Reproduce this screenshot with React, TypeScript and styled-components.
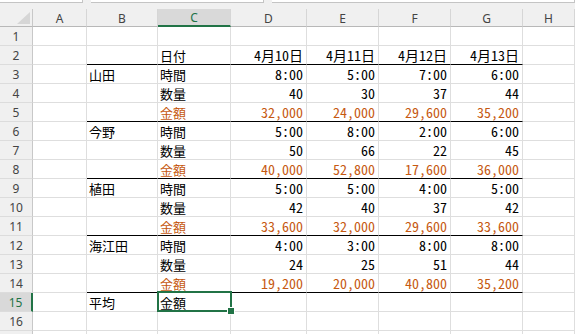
import styled, { createGlobalStyle } from "styled-components";

const GREEN = "#217346";
const ORANGE = "#c65911";
const GRID = "#dedede";

const GlobalStyle = createGlobalStyle`
  html, body {
    margin: 0;
    padding: 0;
    background: #ffffff;
    overflow: hidden;
  }
`;

const COLS = ["A", "B", "C", "D", "E", "F", "G", "H"];

type Row = {
  b?: string;
  c?: string;
  vals?: string[];
  money?: boolean;
  thick?: boolean;
};

const ROWS: Row[] = [
  {},
  { c: "日付", vals: ["4月10日", "4月11日", "4月12日", "4月13日"], thick: true },
  { b: "山田", c: "時間", vals: ["8:00", "5:00", "7:00", "6:00"] },
  { c: "数量", vals: ["40", "30", "37", "44"] },
  { c: "金額", vals: ["32,000", "24,000", "29,600", "35,200"], money: true, thick: true },
  { b: "今野", c: "時間", vals: ["5:00", "8:00", "2:00", "6:00"] },
  { c: "数量", vals: ["50", "66", "22", "45"] },
  { c: "金額", vals: ["40,000", "52,800", "17,600", "36,000"], money: true, thick: true },
  { b: "植田", c: "時間", vals: ["5:00", "5:00", "4:00", "5:00"] },
  { c: "数量", vals: ["42", "40", "37", "42"] },
  { c: "金額", vals: ["33,600", "32,000", "29,600", "33,600"], money: true, thick: true },
  { b: "海江田", c: "時間", vals: ["4:00", "3:00", "8:00", "8:00"] },
  { c: "数量", vals: ["24", "25", "51", "44"] },
  { c: "金額", vals: ["19,200", "20,000", "40,800", "35,200"], money: true, thick: true },
  { b: "平均", c: "金額" },
  {},
];

const SELECTED_ROW = 15;

export default function App() {
  return (
    <>
      <GlobalStyle />
      <Page>
        <FormulaStrip>
          <StripBox $w={82} />
          <StripBox $w={172} />
          <StripBox $grow />
        </FormulaStrip>
        <Sheet>
          <Corner>
            <svg width="13" height="12" viewBox="0 0 13 12">
              <polygon points="13,0 13,12 0,12" fill="#d6d6d6" />
            </svg>
          </Corner>
          {COLS.map((col) => (
            <ColHead key={col} $selected={col === "C"}>
              {col}
            </ColHead>
          ))}
          {ROWS.map((row, i) => {
            const n = i + 1;
            const selected = n === SELECTED_ROW;
            return [
              <RowHead key={`h${n}`} $selected={selected}>
                {n}
              </RowHead>,
              <Cell key={`a${n}`} />,
              <Cell key={`b${n}`} $thick={row.thick}>
                {row.b}
              </Cell>,
              <Cell key={`c${n}`} $thick={row.thick} $money={row.money}>
                {row.c}
                {selected && (
                  <Selection>
                    <Handle />
                  </Selection>
                )}
              </Cell>,
              ...[0, 1, 2, 3].map((k) => (
                <NumCell key={`v${n}${k}`} $thick={row.thick} $money={row.money}>
                  {row.vals?.[k]}
                </NumCell>
              )),
              <Cell key={`h2${n}`} />,
            ];
          })}
          {/* row 17, only its top edge is in view */}
          <RowHead />
          {COLS.map((col) => (
            <Cell key={`r17${col}`} />
          ))}
        </Sheet>
      </Page>
    </>
  );
}

const Page = styled.div`
  width: 575px;
  height: 334px;
  overflow: hidden;
  background: #f0f0f0;
`;

const FormulaStrip = styled.div`
  display: flex;
  gap: 8px;
  height: 9px;
  background: #f0f0f0;
`;

const StripBox = styled.div<{ $w?: number; $grow?: boolean }>`
  height: 2px;
  background: #ffffff;
  border-bottom: 1px solid #c4c4c4;
  border-right: 1px solid #c4c4c4;
  width: ${(p) => (p.$w ? `${p.$w}px` : "auto")};
  flex: ${(p) => (p.$grow ? 1 : "none")};
`;

const Sheet = styled.div`
  display: grid;
  grid-template-columns: 33px 54px 71px 73px 76px 72px 72px 72px 1fr;
  grid-auto-rows: 19px;
  grid-template-rows: 18px;
  background: #ffffff;
`;

const Corner = styled.div`
  box-sizing: border-box;
  background: #f0f0f0;
  border-right: 1px solid #c8c8c8;
  border-bottom: 1px solid #b8b8b8;
  display: flex;
  align-items: flex-end;
  justify-content: flex-end;
  padding: 0 2px 2px 0;
`;

const ColHead = styled.div<{ $selected?: boolean }>`
  box-sizing: border-box;
  background: ${(p) => (p.$selected ? "#d9d9d9" : "#f0f0f0")};
  border-right: 1px solid #d6d6d6;
  border-bottom: ${(p) => (p.$selected ? `2px solid ${GREEN}` : "1px solid #b8b8b8")};
  color: ${(p) => (p.$selected ? GREEN : "#444444")};
  font-family: "Noto Sans", "DejaVu Sans", sans-serif;
  font-size: 12px;
  display: flex;
  align-items: center;
  justify-content: center;
  padding-top: 1px;
`;

const RowHead = styled.div<{ $selected?: boolean }>`
  box-sizing: border-box;
  background: ${(p) => (p.$selected ? "#d9d9d9" : "#f0f0f0")};
  border-right: ${(p) => (p.$selected ? `2px solid ${GREEN}` : "1px solid #c8c8c8")};
  border-bottom: 1px solid #dcdcdc;
  color: ${(p) => (p.$selected ? GREEN : "#444444")};
  font-family: "Noto Sans", "DejaVu Sans", sans-serif;
  font-size: 12px;
  display: flex;
  align-items: center;
  justify-content: center;
`;

const Cell = styled.div<{ $thick?: boolean; $money?: boolean }>`
  position: relative;
  box-sizing: border-box;
  border-right: 1px solid ${GRID};
  border-bottom: 1px solid ${(p) => (p.$thick ? "#000000" : GRID)};
  color: ${(p) => (p.$money ? ORANGE : "#000000")};
  font-family: "Noto Sans CJK JP", sans-serif;
  font-size: 13px;
  line-height: 19px;
  padding: 0 3px 0 2px;
  white-space: nowrap;
`;

const NumCell = styled(Cell)`
  text-align: right;
  font-size: 14px;
  font-feature-settings: "hwid";
`;

const Selection = styled.div`
  position: absolute;
  z-index: 2;
  top: -2px;
  left: -1px;
  width: 75px;
  height: 21px;
  box-sizing: border-box;
  border: 2px solid ${GREEN};
  pointer-events: none;
`;

const Handle = styled.div`
  position: absolute;
  right: -5px;
  bottom: -5px;
  width: 6px;
  height: 6px;
  background: ${GREEN};
  border: 1px solid #ffffff;
`;
